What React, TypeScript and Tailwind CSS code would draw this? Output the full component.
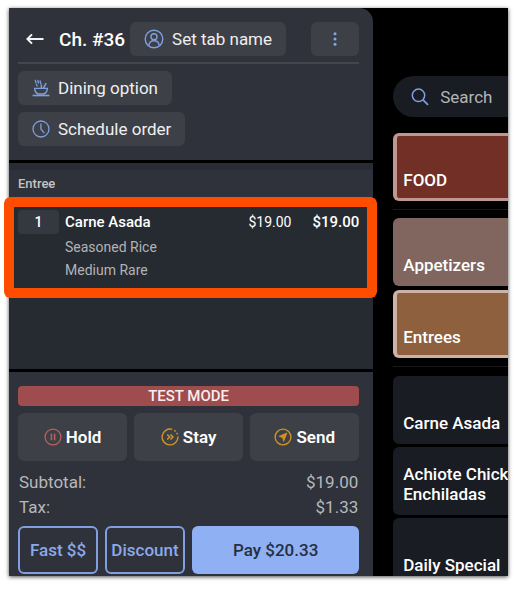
import { useState } from 'react';
import type { ReactNode } from 'react';

type MenuTile = {
  name: string;
  className: string;
};

const CATEGORY_TILES: MenuTile[] = [
  { name: 'Appetizers', className: 'bg-[#80665f] border-[#80665f]' },
  { name: 'Entrees', className: 'bg-[#8e603e] border-[#cdb2a6]' },
];

const ITEM_TILES: MenuTile[] = [
  { name: 'Carne Asada', className: 'bg-[#191c23] border-[#191c23]' },
  { name: 'Achiote Chicken Enchiladas', className: 'bg-[#191c23] border-[#191c23]' },
  { name: 'Daily Special', className: 'bg-[#191c23] border-[#191c23]' },
];

function BackIcon() {
  return (
    <svg viewBox="0 0 18 12" className="w-[18px] h-3" fill="none" stroke="#f4f4f5" strokeWidth="2" aria-hidden>
      <path d="M17.5 6H1.8M6 1.4L1.4 6 6 10.6" />
    </svg>
  );
}

function PersonIcon() {
  return (
    <svg viewBox="0 0 20 20" className="w-5 h-5" fill="none" stroke="#7f9fe0" strokeWidth="1.4" aria-hidden>
      <circle cx="10" cy="10" r="8.8" />
      <circle cx="10" cy="7.8" r="3" />
      <path d="M5 16.6c0-3.2 2-4.8 5-4.8s5 1.6 5 4.8" />
    </svg>
  );
}

function DiningIcon() {
  return (
    <svg viewBox="0 0 18 18" className="w-[18px] h-[18px]" fill="none" stroke="#7f9fe0" strokeWidth="1.4" aria-hidden>
      <path d="M.6 16.5h16.8" strokeWidth="1.6" />
      <path d="M2.7 9.4h12.6c0 2.8-1.4 4.6-3.6 5.6H6.3c-2.2-1-3.6-2.8-3.6-5.6z" />
      <path d="M3.6 1c-1.3 1.3 1.4 2 .1 3.5M6.1 1c-1.3 1.3 1.4 2 .1 3.5M8.4 1.4c-1.3 1.4 1.3 2.2.2 4M4.8 5.2c-.7.9.7 1.3.2 2.2" strokeWidth="1.3" />
      <path d="M9.4 9.2V5.6M11.4 9.2l2.8-5" strokeWidth="1.5" />
    </svg>
  );
}

function ClockIcon() {
  return (
    <svg viewBox="0 0 18 18" className="w-[18px] h-[18px]" fill="none" stroke="#7f9fe0" strokeWidth="1.3" aria-hidden>
      <circle cx="9" cy="9" r="8" />
      <path d="M8.9 3.6V9l3.4 4.2" />
    </svg>
  );
}

function MoreIcon() {
  return (
    <svg viewBox="0 0 4 14" className="w-1 h-[14px]" fill="#86a6ea" aria-hidden>
      <circle cx="2" cy="1.8" r="1.5" />
      <circle cx="2" cy="7" r="1.5" />
      <circle cx="2" cy="12.2" r="1.5" />
    </svg>
  );
}

function SearchIcon() {
  return (
    <svg viewBox="0 0 18 18" className="w-[18px] h-[18px] shrink-0" fill="none" stroke="#7f9fe0" strokeWidth="1.5" aria-hidden>
      <circle cx="7.5" cy="7.3" r="6.2" />
      <path d="M12 11.8l5 5" strokeWidth="1.7" />
    </svg>
  );
}

function HoldIcon() {
  return (
    <svg viewBox="0 0 18 18" className="w-[18px] h-[18px]" fill="none" stroke="#bf605b" strokeWidth="1.3" aria-hidden>
      <circle cx="9" cy="9" r="7.9" />
      <path d="M7.4 5.8v6.4M10.6 5.8v6.4" strokeWidth="1.5" />
    </svg>
  );
}

function StayIcon() {
  return (
    <svg viewBox="0 0 18 18" className="w-[18px] h-[18px]" fill="none" stroke="#cf9524" strokeWidth="1.4" aria-hidden>
      <path d="M11.2 1.4A7.9 7.9 0 1 0 16.9 8.4" />
      <path d="M13.2 2.3l1.5 1.2M15.7 4.8l.8 1.7" />
      <path d="M6.2 6.5L8.7 9l-2.5 2.5M9.5 6.5L12 9l-2.5 2.5" strokeWidth="1.5" />
    </svg>
  );
}

function SendIcon() {
  return (
    <svg viewBox="0 0 18 18" className="w-[18px] h-[18px]" fill="none" stroke="#d2921f" strokeWidth="1.4" aria-hidden>
      <circle cx="9" cy="9" r="7.9" />
      <path d="M13 5L5 8.3l3.6 1.3L9.6 13.4z" fill="#d2921f" strokeWidth=".8" />
    </svg>
  );
}

function ChipButton({ icon, label }: { icon: ReactNode; label: string }) {
  return (
    <button
      type="button"
      className="h-[34px] px-[14px] rounded-md bg-[#3e4048] flex items-center gap-2 text-[17px] text-[#efefef] whitespace-nowrap cursor-pointer"
    >
      {icon}
      <span className="pt-[2px]">{label}</span>
    </button>
  );
}

function ActionButton({ icon, label }: { icon: ReactNode; label: string }) {
  return (
    <button
      type="button"
      className="h-12 flex-1 rounded-md bg-[#3e4048] flex items-center justify-center gap-1 text-[17px] font-semibold text-white cursor-pointer"
    >
      {icon}
      <span className="pt-[2px]">{label}</span>
    </button>
  );
}

function Tile({ name, className }: MenuTile) {
  return (
    <button
      type="button"
      className={`h-[68px] w-full shrink-0 rounded-l-md border-y-3 border-l-4 overflow-hidden flex items-end pb-2 pl-[6px] text-left text-[17px] leading-5 font-medium text-white cursor-pointer ${className}`}
    >
      <span className="w-[130px] shrink-0">{name}</span>
    </button>
  );
}

function CheckHeader() {
  return (
    <header className="bg-[#2f323a] rounded-tr-[14px] pl-[9px] pr-[14px] pt-[14px] pb-[14px]">
      <div className="flex items-center pb-[6px] border-b-2 border-[#44464e]">
        <button type="button" aria-label="Back" className="ml-2 cursor-pointer">
          <BackIcon />
        </button>
        <h1 className="ml-[15px] mr-[5px] pt-[2px] text-[19px] font-medium text-white whitespace-nowrap">Ch. #36</h1>
        <ChipButton icon={<PersonIcon />} label="Set tab name" />
        <button
          type="button"
          aria-label="More options"
          className="ml-auto w-12 h-[34px] rounded-md bg-[#3e4048] flex items-center justify-center cursor-pointer"
        >
          <MoreIcon />
        </button>
      </div>
      <div className="mt-[7px] flex flex-col items-start gap-[7px]">
        <ChipButton icon={<DiningIcon />} label="Dining option" />
        <ChipButton icon={<ClockIcon />} label="Schedule order" />
      </div>
    </header>
  );
}

function OrderList() {
  return (
    <section className="bg-[#262a31] pb-[71px]">
      <div className="h-[7px] bg-[#2a2c35]" />
      <h2 className="bg-[#2f323a] h-[27px] pl-[9px] text-[13px] leading-7 font-medium text-[#c3c4c7]">Entree</h2>
      <div className="relative h-[101px] pl-[9px] pr-[14px] pt-[13px]">
        <div className="flex items-center text-white">
          <span className="w-[41px] h-6 rounded-sm bg-[#353840] flex items-center justify-center text-sm font-medium">
            1
          </span>
          <span className="ml-[6px] text-[15px] font-medium">Carne Asada</span>
          <span className="ml-auto text-sm">$19.00</span>
          <span className="ml-[21px] text-[15px] font-medium">$19.00</span>
        </div>
        <ul className="pl-[47px] pt-[2px] text-sm leading-[23px] text-[#b2b3b6]">
          <li>Seasoned Rice</li>
          <li>Medium Rare</li>
        </ul>
        {/* highlight ring around the selected item */}
        <div className="absolute z-10 inset-y-0 -left-[5px] -right-1 rounded-md bg-[#ff4d00] p-[10px] [mask:linear-gradient(#000_0_0)_content-box_exclude,linear-gradient(#000_0_0)] pointer-events-none" />
      </div>
    </section>
  );
}

function CheckFooter() {
  return (
    <footer className="bg-[#2f323a] pl-[9px] pr-[14px] pt-[14px] pb-[2px]">
      <p className="h-5 rounded-sm bg-[#9e4c4d] text-center text-[15px] leading-5 font-medium text-[#f6eeee]">
        TEST MODE
      </p>
      <div className="mt-[7px] flex gap-[7px]">
        <ActionButton icon={<HoldIcon />} label="Hold" />
        <ActionButton icon={<StayIcon />} label="Stay" />
        <ActionButton icon={<SendIcon />} label="Send" />
      </div>
      <dl className="mt-[9px] px-px text-[17px] leading-[25px] text-[#b7b8bb]">
        <div className="flex justify-between">
          <dt>Subtotal:</dt>
          <dd>$19.00</dd>
        </div>
        <div className="flex justify-between">
          <dt>Tax:</dt>
          <dd>$1.33</dd>
        </div>
      </dl>
      <div className="mt-[6px] flex gap-[7px] h-12 text-[17px] font-medium">
        <button type="button" className="w-20 pt-px rounded-md border-2 border-[#7f9fe0] text-[#8aa9ec] whitespace-nowrap cursor-pointer">
          Fast $$
        </button>
        <button type="button" className="w-20 pt-px rounded-md border-2 border-[#7f9fe0] text-[#8aa9ec] flex items-center justify-center whitespace-nowrap cursor-pointer">
          Discount
        </button>
        <button type="button" className="flex-1 pt-px rounded-md bg-[#8fb0f3] text-[#262e3f] cursor-pointer">
          Pay $20.33
        </button>
      </div>
    </footer>
  );
}

function MenuPanel() {
  const [query, setQuery] = useState('');

  return (
    <aside className="h-0 min-h-full overflow-hidden pl-5 pt-[68px] flex flex-col">
      <label className="h-[41px] shrink-0 rounded-l-full bg-[#191c23] flex items-center gap-[11px] pl-[18px]">
        <SearchIcon />
        <input
          type="text"
          aria-label="Search"
          placeholder="Search"
          value={query}
          onChange={(e) => setQuery(e.target.value)}
          className="min-w-0 flex-1 pt-[2px] bg-transparent outline-none text-[17px] text-white placeholder:text-[#b4b5b7]"
        />
      </label>
      <div className="mt-4 pb-2 border-b border-[#16181c]">
        <Tile name="FOOD" className="bg-[#712f25] border-[#bf9690]" />
      </div>
      <div className="mt-2 pb-2 border-b border-[#16181c] flex flex-col gap-1">
        {CATEGORY_TILES.map((tile) => (
          <Tile key={tile.name} {...tile} />
        ))}
      </div>
      <div className="mt-[9px] flex flex-col gap-[3px]">
        {ITEM_TILES.map((tile) => (
          <Tile key={tile.name} {...tile} />
        ))}
      </div>
    </aside>
  );
}

export default function App() {
  return (
    <div className="min-h-screen bg-white pt-2 pl-[9px] pr-3 pb-3 font-['Roboto',sans-serif]">
      <main className="grid grid-cols-[minmax(0,73fr)_minmax(0,27fr)] bg-black shadow-[0_1px_4px_rgba(0,0,0,0.7)]">
        <div className="flex flex-col gap-[3px]">
          <CheckHeader />
          <OrderList />
          <CheckFooter />
        </div>
        <MenuPanel />
      </main>
    </div>
  );
}
